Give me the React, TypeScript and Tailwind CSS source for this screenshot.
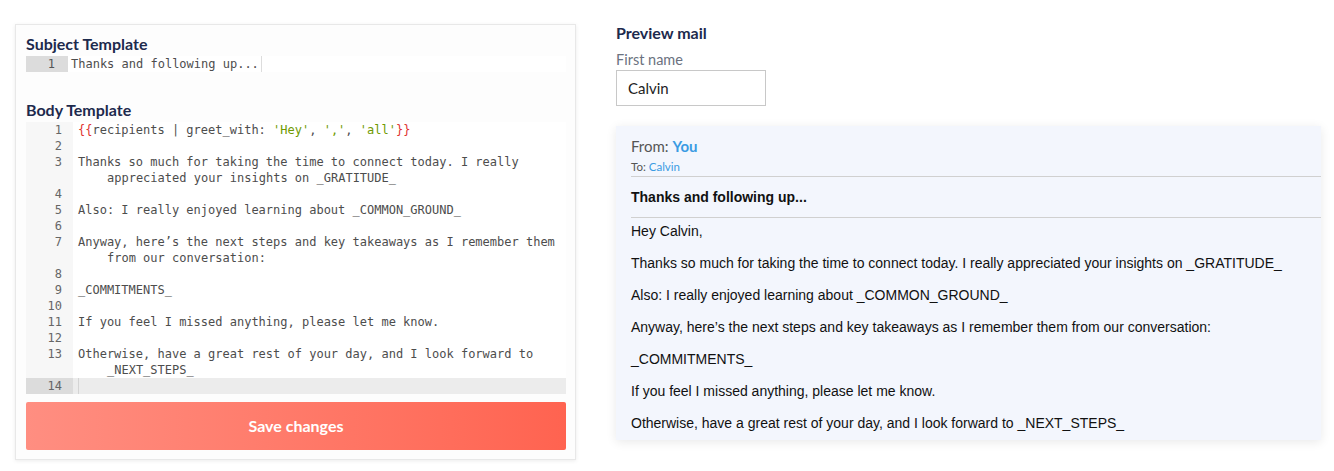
import React from "react";

const mono = "font-['DejaVu_Sans_Mono',monospace]";
const sans = "font-['Lato','Noto_Sans',sans-serif]";
const arial = "font-['Liberation_Sans',Arial,sans-serif]";

const R = ({ children }: { children: React.ReactNode }) => (
  <span className="text-[#e0322f]">{children}</span>
);
const G = ({ children }: { children: React.ReactNode }) => (
  <span className="text-[#6f9a00]">{children}</span>
);

const bodyLines: { n: number; c: React.ReactNode }[] = [
  {
    n: 1,
    c: (
      <>
        <R>{"{{"}</R>recipients | greet_with: <G>'Hey'</G>, <G>','</G>, <G>'all'</G>
        <R>{"}}"}</R>
      </>
    ),
  },
  { n: 2, c: "" },
  {
    n: 3,
    c: "Thanks so much for taking the time to connect today. I really appreciated your insights on _GRATITUDE_",
  },
  { n: 4, c: "" },
  { n: 5, c: "Also: I really enjoyed learning about _COMMON_GROUND_" },
  { n: 6, c: "" },
  {
    n: 7,
    c: "Anyway, here\u2019s the next steps and key takeaways as I remember them from our conversation:",
  },
  { n: 8, c: "" },
  { n: 9, c: "_COMMITMENTS_" },
  { n: 10, c: "" },
  { n: 11, c: "If you feel I missed anything, please let me know." },
  { n: 12, c: "" },
  {
    n: 13,
    c: "Otherwise, have a great rest of your day, and I look forward to _NEXT_STEPS_",
  },
];

const previewParas = [
  "Hey Calvin,",
  "Thanks so much for taking the time to connect today. I really appreciated your insights on _GRATITUDE_",
  "Also: I really enjoyed learning about _COMMON_GROUND_",
  "Anyway, here\u2019s the next steps and key takeaways as I remember them from our conversation:",
  "_COMMITMENTS_",
  "If you feel I missed anything, please let me know.",
  "Otherwise, have a great rest of your day, and I look forward to _NEXT_STEPS_",
];

export default function App() {
  return (
    <div className="flex items-start gap-[40px] pl-[15px] pt-[24px] bg-white min-h-[471px] w-[1334px]">
      {/* Left card */}
      <div className="w-[561px] shrink-0 border border-[#e8e8e8] bg-[#fdfdfd] shadow-[0_1px_4px_rgba(0,0,0,0.08)] pl-[10px] pr-[9px] pt-[9px] pb-[9px]">
        <h2 className={`${sans} font-bold text-[16px] leading-[20px] text-[#1d2a4d]`}>
          Subject Template
        </h2>
        <div className={`${mono} mt-[2px] flex text-[12px] leading-[16px] text-[#4d4d4d] bg-white`}>
          <div className="w-[42px] shrink-0 bg-[#dcdcdc] text-right pr-[13px] text-[#555]">1</div>
          <div className="pl-[3px] flex items-stretch">
            <span>Thanks and following up...</span>
            <span className="ml-[2px] w-px bg-[#ddd]" />
          </div>
        </div>

        <h2 className={`${sans} mt-[28px] font-bold text-[16px] leading-[20px] text-[#1d2a4d]`}>
          Body Template
        </h2>
        <div className={`${mono} mt-[2px] text-[12px] leading-[16px] text-[#4d4d4d] bg-white`}>
          {bodyLines.map((l) => (
            <div key={l.n} className="flex">
              <div className="w-[47px] shrink-0 bg-[#f7f7f7] text-right pr-[11px] text-[#666]">
                {l.n}
              </div>
              <div className="flex-1 min-w-0 whitespace-pre-wrap break-words pl-[34px] -indent-[29px]">
                {l.c === "" ? "\u00a0" : l.c}
              </div>
            </div>
          ))}
          <div className="flex">
            <div className="w-[47px] shrink-0 bg-[#dcdcdc] text-right pr-[11px] text-[#666]">14</div>
            <div className="flex-1 bg-[#ececec] pl-[5px] flex">
              <span className="w-px bg-[#d4d4d4]" />
              <span>{"\u00a0"}</span>
            </div>
          </div>
        </div>

        <button
          className={`${sans} mt-[8px] w-full h-[48px] rounded-[2px] bg-linear-to-r from-[#ff8e81] to-[#ff6350] text-white font-bold text-[16px]`}
        >
          Save changes
        </button>
      </div>

      {/* Right column */}
      <div className="w-[705px] shrink-0">
        <h2 className={`${sans} font-bold text-[16px] leading-[18px] text-[#1d2a4d]`}>
          Preview mail
        </h2>
        <div className={`${sans} mt-[9px] text-[14.5px] leading-[18px] text-[#6b7280]`}>
          First name
        </div>
        <div
          className={`${sans} mt-px w-[150px] h-[36px] border border-[#c8c8c8] bg-white pl-[11px] flex items-center text-[15px] text-[#222]`}
        >
          Calvin
        </div>

        <div className="mt-[20px] h-[314px] bg-[#f3f6fd] shadow-[0_2px_10px_rgba(0,0,0,0.09)] pl-[15px] pt-[10px]">
          <div className={`${sans} text-[15px] leading-[20px] text-[#555]`}>
            From: <span className="font-bold text-[#3a9be3]">You</span>
          </div>
          <div className={`${sans} mt-[4px] text-[11.5px] leading-[14px] text-[#555]`}>
            To: <span className="text-[#3a9be3]">Calvin</span>
          </div>
          <div className="mt-[2px] border-t border-[#d0d0d0]" />
          <div className={`${arial} mt-[10px] text-[14px] leading-[20px] font-bold text-[#111]`}>
            Thanks and following up...
          </div>
          <div className="mt-[10px] border-t border-[#d0d0d0]" />
          <div className={`${arial} mt-[5px] text-[14px] leading-[16px] text-[#111] flex flex-col gap-[16px]`}>
            {previewParas.map((p, i) => (
              <p key={i}>{p}</p>
            ))}
          </div>
        </div>
      </div>
    </div>
  );
}
